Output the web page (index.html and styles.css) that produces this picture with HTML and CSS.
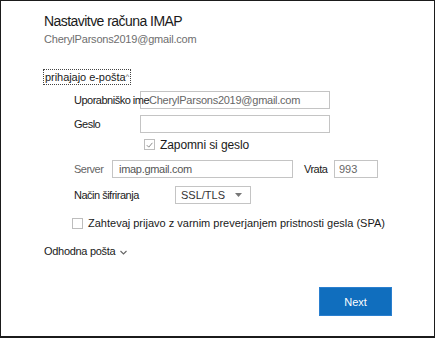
FILE: index.html
```html
<!DOCTYPE html>
<html lang="sl">
<head>
    <meta charset="UTF-8">
    <title>Nastavitve računa IMAP</title>
    <link rel="stylesheet" href="styles.css">
</head>
<body>
    <div class="window">
        <h1 class="title">Nastavitve računa IMAP</h1>
        <div class="account">CherylParsons2019@gmail.com</div>

        <div class="toggle">prihajajo e-pošta<span class="caret">^</span></div>

        <div class="fields">
            <div class="row row-user">
                <span class="label label-user">Uporabniško ime</span>
                <div class="input input-user">CherylParsons2019@gmail.com</div>
            </div>
            <div class="row row-pass">
                <span class="label label-user">Geslo</span>
                <div class="input input-user"></div>
            </div>
            <div class="row row-remember">
                <span class="check checked">
                    <svg width="10" height="10" viewBox="0 0 10 10"><path d="M2 5.2 L4.2 7.4 L8.2 2.6" fill="none" stroke="#8a8a8a" stroke-width="1.1"/></svg>
                </span>
                <span class="remember-text">Zapomni si geslo</span>
            </div>
            <div class="row row-server">
                <span class="label label-server">Server</span>
                <div class="input input-server">imap.gmail.com</div>
                <span class="label label-port">Vrata</span>
                <div class="input input-port">993</div>
            </div>
            <div class="row row-enc">
                <span class="label label-enc">Način šifriranja</span>
                <div class="select">
                    <span>SSL/TLS</span>
                    <svg width="7" height="4" viewBox="0 0 7 4"><path d="M0 0 L7 0 L3.5 4 Z" fill="#777"/></svg>
                </div>
            </div>
            <div class="row row-spa">
                <span class="check"></span>
                <span class="spa-text">Zahtevaj prijavo z varnim preverjanjem pristnosti gesla (SPA)</span>
            </div>
        </div>

        <div class="outgoing">Odhodna pošta
            <svg width="7" height="5" viewBox="0 0 7 5"><path d="M0.5 1 L3.5 4 L6.5 1" fill="none" stroke="#666" stroke-width="1.1"/></svg>
        </div>

        <div class="actions">
            <button class="next">Next</button>
        </div>
    </div>
</body>
</html>
```

FILE: styles.css
```css
/* Dialog nastavitev računa */
body {
    margin: 0;
    background: #fff;
    font-family: "Liberation Sans", Arial, sans-serif;
    color: #1a1a1a;
}

.window {
    width: 435px;
    height: 338px;
    box-sizing: border-box;
    border: 1px solid #1b1b1b;
    border-bottom-width: 2px;
    padding: 11px 0 0 43px;
    background: #fff;
}

.title {
    margin: 0;
    font-size: 14px;
    font-weight: normal;
    line-height: 18px;
    letter-spacing: -0.55px;
    color: #1a1a1a;
}

.account {
    margin-top: 2px;
    font-size: 11px;
    line-height: 14px;
    color: #6e6e6e;
    letter-spacing: -0.2px;
}

.toggle {
    display: inline-block;
    margin: 23px 0 0 -1px;
    height: 14px;
    padding: 0 1px;
    border: 1px dotted #444;
    font-size: 11px;
    line-height: 14px;
    letter-spacing: -0.05px;
}

.caret {
    font-size: 8px;
    vertical-align: top;
    color: #555;
}

.fields {
    margin-left: 30px;
}

.row {
    display: flex;
    align-items: center;
    font-size: 11px;
}

.label {
    flex: none;
    white-space: nowrap;
    letter-spacing: -0.5px;
}

.input {
    box-sizing: border-box;
    height: 18px;
    border: 1px solid #c4c4c4;
    padding: 0 4px;
    font-size: 11px;
    line-height: 16px;
    color: #666;
    background: #fff;
}

.row-user {
    margin-top: 6px;
}

.row-pass {
    margin-top: 6px;
}

.label-user {
    width: 66px;
    position: relative;
    z-index: 1;
}

.input-user {
    width: 190px;
}

.row-user .input-user {
    padding-left: 8px;
    letter-spacing: -0.25px;
}

.row-remember {
    margin: 5px 0 0 70px;
    height: 13px;
}

.check {
    box-sizing: border-box;
    width: 11px;
    height: 11px;
    border: 1px solid #bdbdbd;
    display: flex;
    align-items: center;
    justify-content: center;
    flex: none;
}

.remember-text {
    margin-left: 5px;
    font-size: 12px;
    letter-spacing: -0.1px;
}

.row-server {
    margin-top: 9px;
}

.label-server {
    width: 38px;
    color: #666;
}

.input-server {
    width: 181px;
    padding-left: 6px;
    color: #555;
    letter-spacing: -0.3px;
}

.label-port {
    margin-left: 11px;
    width: 30px;
}

.input-port {
    width: 44px;
}

.row-enc {
    margin-top: 8px;
}

.label-enc {
    width: 101px;
}

.select {
    box-sizing: border-box;
    width: 76px;
    height: 18px;
    border: 1px solid #c4c4c4;
    padding: 0 8px 0 5px;
    display: flex;
    align-items: center;
    justify-content: space-between;
    font-size: 11px;
    color: #333;
}

.row-spa {
    margin: 13px 0 0 -2px;
}

.spa-text {
    margin-left: 5px;
    letter-spacing: 0;
    white-space: nowrap;
}

.outgoing {
    margin-top: 15px;
    font-size: 11px;
    line-height: 14px;
    letter-spacing: -0.3px;
}

.outgoing svg {
    margin-left: 2px;
    vertical-align: middle;
}

.actions {
    display: flex;
    justify-content: flex-end;
    margin-top: 29px;
    padding-right: 42px;
}

.next {
    width: 73px;
    height: 29px;
    border: 1px solid #2a7fcf;
    background: #106ebe;
    color: #fff;
    font-family: inherit;
    font-size: 11px;
    cursor: pointer;
}
```
